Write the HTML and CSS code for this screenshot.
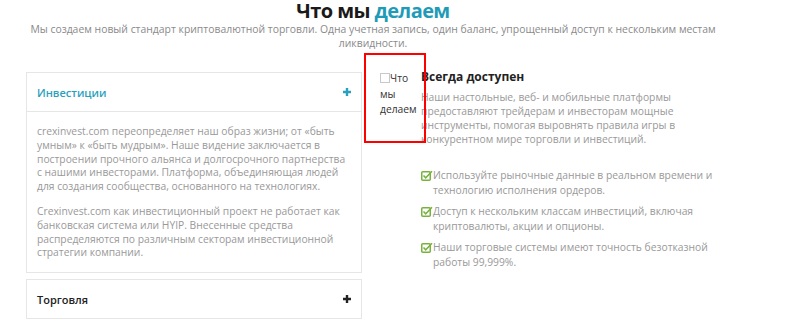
FILE: index.html
```html
<!DOCTYPE html>
<html lang="ru">
  <head>
    <meta charset="UTF-8" />
    <meta name="viewport" content="width=device-width, initial-scale=1.0" />
    <title>Что мы делаем</title>
    <link rel="stylesheet" href="styles.css">
  </head>
  <body>
    <section class="about">
      <h2 class="about-title">Что мы <span>делаем</span></h2>
      <p class="about-lead">
        Мы создаем новый стандарт криптовалютной торговли. Одна учетная запись, один баланс, упрощенный доступ к нескольким местам ликвидности.
      </p>

      <div class="about-row">
        <div class="accordion">
          <div class="acc-item">
            <div class="acc-head acc-open">
              <span>Инвестиции</span>
              <svg class="acc-plus" viewBox="0 0 10 10"><path d="M5 1v8M1 5h8" /></svg>
            </div>
            <div class="acc-body">
              <p>crexinvest.com переопределяет наш образ жизни; от «быть умным» к «быть мудрым». Наше видение заключается в построении прочного альянса и долгосрочного партнерства с нашими инвесторами. Платформа, объединяющая людей для создания сообщества, основанного на технологиях.</p>
              <p>Crexinvest.com как инвестиционный проект не работает как банковская система или HYIP. Внесенные средства распределяются по различным секторам инвестиционной стратегии компании.</p>
            </div>
          </div>
          <div class="acc-item">
            <div class="acc-head">
              <span>Торговля</span>
              <svg class="acc-plus" viewBox="0 0 10 10"><path d="M5 1v8M1 5h8" /></svg>
            </div>
          </div>
        </div>

        <div class="feature">
          <div class="feature-img">
            <span class="broken"></span>Что мы делаем
          </div>
          <div class="feature-text">
            <h3>Всегда доступен</h3>
            <p>Наши настольные, веб- и мобильные платформы предоставляют трейдерам и инвесторам мощные инструменты, помогая выровнять правила игры в конкурентном мире торговли и инвестиций.</p>
            <ul class="checks">
              <li><svg class="check" viewBox="0 0 12 11"><rect x="0.75" y="1.75" width="8.5" height="8.5" rx="1" /><path d="M2.5 5.5l2.2 2.3L11 1.2" /></svg>Используйте рыночные данные в реальном времени и технологию исполнения ордеров.</li>
              <li><svg class="check" viewBox="0 0 12 11"><rect x="0.75" y="1.75" width="8.5" height="8.5" rx="1" /><path d="M2.5 5.5l2.2 2.3L11 1.2" /></svg>Доступ к нескольким классам инвестиций, включая криптовалюты, акции и опционы.</li>
              <li><svg class="check" viewBox="0 0 12 11"><rect x="0.75" y="1.75" width="8.5" height="8.5" rx="1" /><path d="M2.5 5.5l2.2 2.3L11 1.2" /></svg>Наши торговые системы имеют точность безотказной работы 99,999%.</li>
            </ul>
          </div>
        </div>
      </div>
    </section>
  </body>
</html>
```

FILE: styles.css
```css
body {
  margin: 0;
  padding: 0;
  background-color: #fff;
  font-family: "Open Sans", "Noto Sans", sans-serif;
  color: #999;
}
.about {
  width: 746px;
}
.about-title {
  margin: 0;
  text-align: center;
  font-size: 20px;
  line-height: 22px;
  font-weight: 700;
  color: #1a1a1a;
  letter-spacing: -0.6px;
}
.about-title span {
  color: #1f9bb8;
}
.about-lead {
  margin: 0 auto;
  width: 700px;
  text-align: center;
  font-size: 10.4px;
  line-height: 14px;
  color: #8a8a8a;
}
.about-row {
  display: flex;
  align-items: flex-start;
  margin-top: 3px;
  padding-left: 26px;
}
.accordion {
  width: 336px;
  margin-top: 19px;
  display: flex;
  flex-direction: column;
  gap: 6px;
}
.acc-item {
  display: flex;
  flex-direction: column;
}
.acc-head {
  display: flex;
  justify-content: space-between;
  align-items: center;
  height: 38px;
  padding: 0 10px;
  border: 1px solid #e6e6e6;
  font-size: 11px;
  font-weight: 600;
  color: #222;
}
.acc-head.acc-open {
  color: #2a9fbe;
}
.acc-plus {
  width: 10px;
  height: 10px;
  margin-right: -1px;
  stroke: currentColor;
  stroke-width: 2.4;
  fill: none;
}
.acc-body {
  border: 1px solid #e6e6e6;
  border-top: none;
  padding: 13px 10px 12px;
  font-size: 10.3px;
  line-height: 13.8px;
  color: #999;
}
.acc-body p {
  margin: 0 0 11px;
}
.acc-body p:last-child {
  margin-bottom: 0;
}
.feature {
  display: flex;
  align-items: flex-start;
  margin-left: 2px;
  flex: 1;
}
.feature-img {
  position: relative;
  z-index: 1;
  box-sizing: border-box;
  width: 62px;
  height: 90px;
  flex: none;
  border: 2px solid #f00;
  padding: 16px 12px 0 14px;
  font-size: 10.3px;
  line-height: 15.5px;
  color: #333;
}
.broken {
  display: inline-block;
  width: 8px;
  height: 8px;
  border: 1px solid #c8c8c8;
  vertical-align: -1px;
}
.feature-text {
  margin-left: -5px;
  padding-top: 16px;
  width: 302px;
  flex: none;
}
.feature-text h3 {
  margin: 0;
  font-size: 12px;
  line-height: 16px;
  font-weight: 700;
  color: #222;
}
.feature-text p {
  margin: 5px 0 0;
  font-size: 10.3px;
  line-height: 14px;
  color: #999;
}
.checks {
  list-style: none;
  margin: 22px 0 0;
  padding: 0 0 0 12px;
  font-size: 10.3px;
  line-height: 15px;
  color: #999;
}
.checks li {
  position: relative;
  margin-bottom: 6px;
}
.check {
  position: absolute;
  left: -12px;
  top: 2px;
  width: 12px;
  height: 11px;
  fill: none;
  stroke: #78b13f;
  stroke-width: 1.5;
}
```
